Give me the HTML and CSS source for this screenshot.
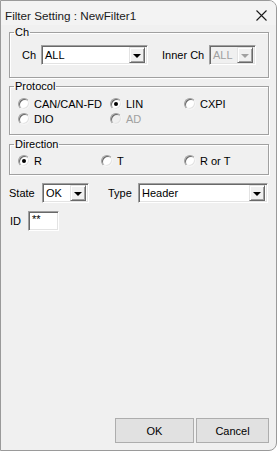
FILE: index.html
```html
<!DOCTYPE html>
<html lang="en">
<head>
  <meta charset="UTF-8">
  <meta name="viewport" content="width=device-width, initial-scale=1.0">
  <title>Filter Setting</title>
  <link rel="stylesheet" href="styles.css">
</head>
<body>
  <div class="window">
    <div class="titlebar">
      <span class="title">Filter Setting : NewFilter1</span>
      <svg class="close" width="11" height="11" viewBox="0 0 11 11">
        <path d="M0.5 0.5 L10.5 10.5 M10.5 0.5 L0.5 10.5" stroke="#1a1a1a" stroke-width="1.1" fill="none"/>
      </svg>
    </div>

    <div class="client">
      <fieldset class="group group-ch">
        <legend>Ch</legend>
        <div class="row">
          <span class="label lbl-ch">Ch</span>
          <div class="combo combo-ch">
            <span class="value">ALL</span>
            <span class="drop"><i class="arrow"></i></span>
          </div>
          <span class="label lbl-inner">Inner Ch</span>
          <div class="combo combo-inner disabled">
            <span class="value">ALL</span>
            <span class="drop"><i class="arrow"></i></span>
          </div>
        </div>
      </fieldset>

      <fieldset class="group group-protocol">
        <legend>Protocol</legend>
        <div class="radios protocol-grid">
          <label class="radio"><span class="dot"></span>CAN/CAN-FD</label>
          <label class="radio checked"><span class="dot"></span>LIN</label>
          <label class="radio"><span class="dot"></span>CXPI</label>
          <label class="radio"><span class="dot"></span>DIO</label>
          <label class="radio disabled"><span class="dot"></span>AD</label>
        </div>
      </fieldset>

      <fieldset class="group group-direction">
        <legend>Direction</legend>
        <div class="radios direction-grid">
          <label class="radio checked"><span class="dot"></span>R</label>
          <label class="radio"><span class="dot"></span>T</label>
          <label class="radio"><span class="dot"></span>R or T</label>
        </div>
      </fieldset>

      <div class="row state-row">
        <span class="label lbl-state">State</span>
        <div class="combo combo-state">
          <span class="value">OK</span>
          <span class="drop"><i class="arrow"></i></span>
        </div>
        <span class="label lbl-type">Type</span>
        <div class="combo combo-type">
          <span class="value">Header</span>
          <span class="drop"><i class="arrow"></i></span>
        </div>
      </div>

      <div class="row id-row">
        <span class="label lbl-id">ID</span>
        <div class="edit">**</div>
      </div>

      <div class="buttons">
        <button class="btn btn-ok">OK</button>
        <button class="btn btn-cancel">Cancel</button>
      </div>
    </div>
  </div>
</body>
</html>
```

FILE: styles.css
```css
html, body {
  margin: 0;
  padding: 0;
  background: #ffffff;
}
body {
  font-family: "Liberation Sans", Arial, sans-serif;
  font-size: 11px;
  color: #000;
}
.window {
  box-sizing: border-box;
  width: 277px;
  height: 451px;
  border: 1px solid #9a9a9a;
  border-radius: 0 8px 8px 0;
  background: #f0f0f0;
  display: flex;
  flex-direction: column;
  overflow: hidden;
}
.titlebar {
  height: 24px;
  display: flex;
  align-items: center;
  justify-content: space-between;
  padding: 0 9px 0 4px;
  background: #f3f3f3;
  flex-shrink: 0;
}
.title {
  font-size: 11.7px;
  color: #1a1a1a;
  margin-top: 5px;
}
.close {
  margin-top: 5px;
}
.client {
  flex: 1;
  display: flex;
  flex-direction: column;
  padding: 1px 7px 7px 8px;
}

/* group boxes */
.group {
  box-sizing: border-box;
  margin: 0;
  padding: 0;
  border: 1px solid #a0a0a0;
  box-shadow: inset 1px 1px #fff, 1px 1px #fff;
  min-width: 0;
}
.group legend {
  padding: 0 1px;
  margin-left: 4px;
  line-height: 12px;
  height: 12px;
}
.group-ch {
  height: 52px;
}
.group-ch .row {
  margin-top: 7px;
}
.group-protocol {
  margin-top: 2px;
  height: 55px;
}
.group-direction {
  margin-top: 3px;
  height: 37px;
}

.row {
  display: flex;
  align-items: center;
}
.label {
  white-space: nowrap;
}
.lbl-ch { margin-left: 12px; width: 19px; }
.lbl-inner { margin-left: 14px; width: 47px; }
.lbl-state { margin-left: 0; width: 33px; }
.lbl-type { margin-left: 19px; width: 30px; }
.lbl-id { margin-left: 1px; width: 18px; }

/* combo boxes */
.combo {
  box-sizing: border-box;
  height: 20px;
  background: #fff;
  border: 1px solid;
  border-color: #a0a0a0 #ffffff #ffffff #a0a0a0;
  box-shadow: inset 1px 1px #696969, inset -1px -1px #e3e3e3;
  display: flex;
  align-items: center;
  justify-content: space-between;
  padding: 0 2px 0 3px;
}
.combo .value {
  line-height: 14px;
}
.combo-ch { width: 107px; }
.combo-inner { width: 47px; }
.combo-state { width: 47px; }
.combo-type { width: 130px; }
.drop {
  box-sizing: border-box;
  width: 16px;
  height: 16px;
  background: #f0f0f0;
  border: 1px solid;
  border-color: #e3e3e3 #696969 #696969 #e3e3e3;
  box-shadow: inset 1px 1px #fff, inset -1px -1px #a0a0a0;
  display: flex;
  align-items: center;
  justify-content: center;
}
.arrow {
  width: 0;
  height: 0;
  border-left: 4px solid transparent;
  border-right: 4px solid transparent;
  border-top: 4px solid #000;
  margin-top: 1px;
}
.combo.disabled {
  background: #f0f0f0;
}
.combo.disabled .value {
  color: #a0a0a0;
}
.combo.disabled .arrow {
  border-top-color: #a0a0a0;
}

/* radio buttons */
.radios {
  display: grid;
}
.protocol-grid {
  grid-template-columns: 92px 74px 1fr;
  row-gap: 3px;
  margin-top: 6px;
}
.direction-grid {
  grid-template-columns: 83px 83px 1fr;
  margin-top: 5px;
}
.radio {
  display: flex;
  align-items: center;
  height: 12px;
  margin-left: 8px;
  white-space: nowrap;
}
.dot {
  box-sizing: border-box;
  width: 12px;
  height: 12px;
  border-radius: 50%;
  background: #fff;
  border: 1px solid;
  border-color: #a0a0a0 #f4f4f4 #f4f4f4 #a0a0a0;
  box-shadow: inset 1px 1px #696969, inset -1px -1px #e3e3e3;
  margin-right: 4px;
  position: relative;
}
.radio.checked .dot::after {
  content: "";
  position: absolute;
  left: 3px;
  top: 3px;
  width: 4px;
  height: 4px;
  border-radius: 50%;
  background: #000;
}
.radio.disabled {
  color: #a0a0a0;
}
.radio.disabled .dot {
  background: #f0f0f0;
}

/* state / id rows */
.state-row {
  margin-top: 8px;
}
.id-row {
  margin-top: 8px;
  align-items: flex-start;
}
.id-row .label {
  margin-top: 4px;
}
.edit {
  box-sizing: border-box;
  width: 31px;
  height: 20px;
  background: #fff;
  border: 1px solid;
  border-color: #a0a0a0 #ffffff #ffffff #a0a0a0;
  box-shadow: inset 1px 1px #696969, inset -1px -1px #e3e3e3;
  padding: 1px 3px;
  line-height: 12px;
}

/* buttons */
.buttons {
  margin-top: auto;
  display: flex;
  justify-content: flex-end;
  gap: 2px;
}
.btn {
  box-sizing: border-box;
  height: 25px;
  background: #e1e1e1;
  border: 1px solid #adadad;
  font-family: "Liberation Sans", Arial, sans-serif;
  font-size: 11px;
  color: #000;
  padding: 0;
}
.btn-ok { width: 79px; }
.btn-cancel { width: 73px; }
```
